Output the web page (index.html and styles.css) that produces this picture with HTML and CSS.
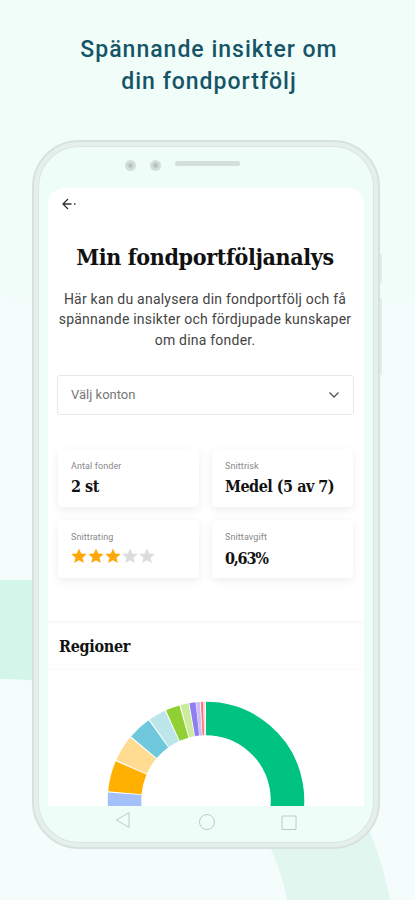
FILE: index.html
```html
<!DOCTYPE html>
<html lang="sv">

<head>
  <meta charset="UTF-8">
  <meta name="viewport" content="width=device-width, initial-scale=1.0">
  <title>Min fondportföljanalys</title>
  <link rel="stylesheet" href="styles.css">
</head>

<body>
  <svg class="backdrop" viewBox="0 0 415 900" aria-hidden="true">
    <path fill="#f4fdfb" d="M0 297Q200 310 390 303L415 303V900H0Z" />
    <path fill="#d4f5ea" d="M0 580H60V684Q30 679 0 679Z" />
    <path fill="#e0f6ef" d="M268 843L300 800L355 800Q379 845 390 900H287Q281 869 268 843Z" />
  </svg>
  <h1 class="tagline">Spännande insikter om<br>din fondportfölj</h1>
  <div class="phone">
    <div class="speaker">
      <i class="lens"></i>
      <i class="lens"></i>
      <i class="slot"></i>
    </div>
    <main class="screen">
      <svg class="back" viewBox="0 0 16 14">
        <path d="M7 2L2 7L7 12M2 7H10.500M13 7H14.500" />
      </svg>
      <h2 class="title">Min fondportföljanalys</h2>
      <p class="intro">Här kan du analysera din fondportfölj och få<br>spännande insikter och fördjupade kunskaper<br>om dina fonder.</p>
      <div class="select">
        <span>Välj konton</span>
        <svg viewBox="0 0 12 8"><path d="M1.500 1.500L6 6L10.500 1.500" /></svg>
      </div>
      <div class="cards">
        <div class="card"><small>Antal fonder</small><strong>2 st</strong></div>
        <div class="card"><small>Snittrisk</small><strong>Medel (5 av 7)</strong></div>
        <div class="card">
          <small>Snittrating</small>
          <svg class="stars" viewBox="0 0 84 16">
            <defs>
              <path id="star" d="M8 .5L10.200 5.600L15.700 6.100L11.500 9.700L12.800 15.100L8 12.200L3.200 15.100L4.500 9.700L.3 6.100L5.800 5.600Z" />
            </defs>
            <g fill="#ffa80a">
              <use href="#star" />
              <use href="#star" x="17" />
              <use href="#star" x="34" />
            </g>
            <g fill="#dcdcdc">
              <use href="#star" x="51" />
              <use href="#star" x="68" />
            </g>
          </svg>
        </div>
        <div class="card"><small>Snittavgift</small><strong class="fee">0,63%</strong></div>
      </div>
      <h3 class="section">Regioner</h3>
      <!-- pathLength is 360, so the dash values are degrees -->
      <svg class="donut" viewBox="0 0 198 105">
        <g transform="rotate(170 99 99)">
          <circle cx="99" cy="99" r="81.500" pathLength="360" stroke="#a3c0fb" stroke-dasharray="14.400 360" />
          <circle cx="99" cy="99" r="81.500" pathLength="360" stroke="#ffb000" stroke-dasharray="18 360" stroke-dashoffset="-15.200" />
          <circle cx="99" cy="99" r="81.500" pathLength="360" stroke="#ffdc91" stroke-dasharray="15.500 360" stroke-dashoffset="-34" />
          <circle cx="99" cy="99" r="81.500" pathLength="360" stroke="#70c8dc" stroke-dasharray="13.900 360" stroke-dashoffset="-50.300" />
          <circle cx="99" cy="99" r="81.500" pathLength="360" stroke="#bce6e9" stroke-dasharray="10.200 360" stroke-dashoffset="-65" />
          <circle cx="99" cy="99" r="81.500" pathLength="360" stroke="#90d034" stroke-dasharray="8.300 360" stroke-dashoffset="-75.900" />
          <circle cx="99" cy="99" r="81.500" pathLength="360" stroke="#cbec9c" stroke-dasharray="4.800 360" stroke-dashoffset="-84.900" />
          <circle cx="99" cy="99" r="81.500" pathLength="360" stroke="#907df2" stroke-dasharray="3.700 360" stroke-dashoffset="-90.300" />
          <circle cx="99" cy="99" r="81.500" pathLength="360" stroke="#c9befa" stroke-dasharray="2.200 360" stroke-dashoffset="-94.300" />
          <circle cx="99" cy="99" r="81.500" pathLength="360" stroke="#ff7676" stroke-dasharray="1.400 360" stroke-dashoffset="-97" />
          <circle cx="99" cy="99" r="81.500" pathLength="360" stroke="#ffd5d5" stroke-dasharray=".8 360" stroke-dashoffset="-98.600" />
          <circle cx="99" cy="99" r="81.500" pathLength="360" stroke="#00c382" stroke-dasharray="100 360" stroke-dashoffset="-100" />
        </g>
      </svg>
    </main>
    <nav class="nav">
      <svg viewBox="0 0 16 18"><path d="M14 1.500V16.500L1.500 9Z" /></svg>
      <svg viewBox="0 0 16 18"><circle cx="9" cy="11" r="7.500" /></svg>
      <svg viewBox="0 0 16 18"><path d="M1 5H15V18.500H1Z" /></svg>
    </nav>
    <i class="side volume"></i>
    <i class="side power"></i>
  </div>
</body>

</html>
```

FILE: styles.css
```css
* {
  box-sizing: border-box;
}

body {
  margin: 0;
  width: 415px;
  height: 900px;
  overflow: hidden;
  position: relative;
  background: #f1fdf9;
  font-family: Roboto, sans-serif;
}

svg {
  display: block;
}

.backdrop {
  position: absolute;
  inset: 0;
  z-index: -1;
}

.tagline {
  margin: 0;
  padding: 34px 0 0 3px;
  height: 140px;
  color: #155567;
  font-size: 23px;
  font-weight: 500;
  line-height: 32px;
  letter-spacing: 1px;
  text-align: center;
}

.phone {
  position: relative;
  width: 348px;
  height: 709px;
  margin-left: 32px;
  border: 2px solid #d7e2de;
  border-radius: 47px;
  background: #effdf9;
  box-shadow: inset 0 0 0 4px #e5f0ed, inset 0 0 0 5px #dae6e2;
}

.speaker {
  display: flex;
  height: 46px;
  padding: 18px 0 0 91px;
}

.lens {
  width: 11px;
  height: 11px;
  margin-right: 14px;
  border-radius: 50%;
  background: radial-gradient(#b4c0bc 15%, #d3dfdb 45%);
}

.slot {
  width: 65px;
  height: 5px;
  margin-top: 1px;
  border-radius: 2px;
  background: #d3dfdb;
}

.screen {
  width: 316px;
  height: 618px;
  margin-left: 14px;
  padding-top: 9px;
  overflow: hidden;
  border-radius: 16px 16px 0 0;
  background: #fff;
}

.back {
  width: 16px;
  height: 14px;
  margin-left: 13px;
  fill: none;
  stroke: #333;
  stroke-width: 1.3;
}

.title,
.card strong,
.section {
  color: #111;
  font-family: "DejaVu Serif Condensed", "DejaVu Serif", serif;
  font-stretch: condensed;
  font-weight: bold;
  white-space: nowrap;
}

.title {
  margin: 30px 0 0;
  padding-right: 2px;
  font-size: 23px;
  line-height: 32px;
  letter-spacing: -0.35px;
  text-align: center;
}

.intro {
  margin: 16px -10px 0;
  padding-right: 2px;
  color: #444;
  font-size: 14px;
  line-height: 20.3px;
  letter-spacing: 0.22px;
  text-align: center;
}

.select {
  display: flex;
  align-items: center;
  justify-content: space-between;
  width: 297px;
  height: 40px;
  margin: 25px 0 0 9px;
  padding: 0 13px;
  border: 1px solid #e8e8e8;
  border-radius: 3px;
  color: #777;
  font-size: 13px;
}

.select svg {
  width: 12px;
  height: 8px;
  fill: none;
  stroke: #555;
  stroke-width: 1.3;
}

.cards {
  display: grid;
  grid-template-columns: 141px 141px;
  grid-template-rows: 58px 58px;
  gap: 13px;
  margin: 34px 0 0 10px;
}

.card {
  padding: 11px 0 0 13px;
  border-radius: 4px;
  background: #fff;
  box-shadow: 0 3px 10px rgba(0, 0, 0, 0.07);
}

.card small {
  display: block;
  color: #888;
  font-size: 9px;
  line-height: 12px;
  letter-spacing: 0.1px;
}

.card strong {
  display: block;
  margin-top: 4px;
  font-size: 16px;
  line-height: 22px;
  letter-spacing: -0.5px;
}

.card .fee {
  margin-top: 5px;
  letter-spacing: -1.2px;
}

.stars {
  width: 84px;
  height: 16px;
  margin-top: 5px;
}

.section {
  height: 49px;
  margin: 43px 0 0;
  padding-left: 11px;
  border: solid #f9f9f9;
  border-width: 2px 0 1px;
  background: #fefefe;
  font-size: 16px;
  line-height: 48px;
  letter-spacing: -0.3px;
}

.donut {
  width: 198px;
  height: 105px;
  margin: 31px 0 0 59px;
  fill: none;
  stroke-width: 33.5;
}

.nav {
  display: flex;
  justify-content: space-between;
  width: 182px;
  margin: 5px 0 0 81px;
}

.nav svg {
  width: 16px;
  height: 18px;
  overflow: visible;
  fill: none;
  stroke: #bfcac6;
}

.side {
  position: absolute;
  left: 346px;
  width: 2px;
  background: #e3edea;
}

.volume {
  top: 112px;
  height: 29px;
}

.power {
  top: 156px;
  height: 77px;
}
```
